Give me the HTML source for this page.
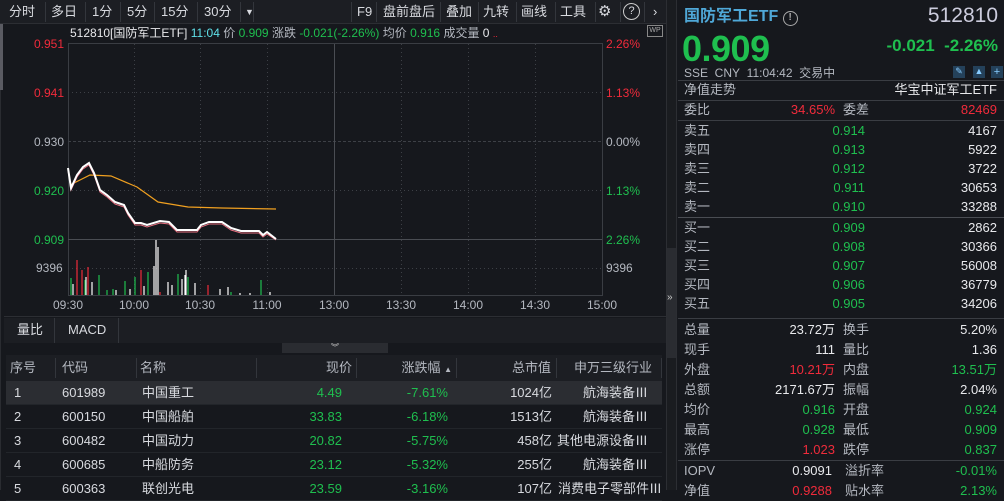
<!DOCTYPE html><html><head><meta charset="utf-8"><style>
*{margin:0;padding:0;box-sizing:border-box}
body{width:1004px;height:490px;background:#16181d;color:#d8dadf;font-family:"Liberation Sans","Noto Sans CJK SC",sans-serif;font-size:13px;position:relative;overflow:hidden}
.a{position:absolute;white-space:nowrap}
.g{color:#1fbf4f}.r{color:#f02b3b}.w{color:#e8e9ec}.l{color:#b4b8c0}
.tb{position:absolute;left:0;top:0;width:666px;height:24px;background:#1c1e23;border-bottom:1px solid #2c2e33}
.tb span{position:absolute;top:3px;font-size:13px;line-height:18px;height:18px;color:#d8dadf}
.sep{position:absolute;top:2px;width:1px;height:20px;background:#33363c}
.rp div.row{position:absolute;left:684px;width:313px;height:18px;font-size:13px;line-height:18px}
.rp div.row span{line-height:18px;height:18px;top:0}
.rp .k{position:absolute;left:0}
.rp .v{position:absolute;right:162px}
.rp .k2{position:absolute;left:159px}
.rp .v2{position:absolute;right:0}
.hl{position:absolute;height:1px;background:#3a3d43}
.tr{position:absolute;left:6px;width:656px;height:24px;font-size:13px;border-bottom:1px solid #22252a}
.tr span{position:absolute;top:3px;line-height:18px;height:18px}
.th span{line-height:18px;height:18px}
</style></head><body>
<div class="tb">
<span style="left:9px">分时</span><div class="sep" style="left:45px"></div>
<span style="left:51px">多日</span><div class="sep" style="left:85px"></div>
<span style="left:92px">1分</span><div class="sep" style="left:120px"></div>
<span style="left:127px">5分</span><div class="sep" style="left:154px"></div>
<span style="left:161px">15分</span><div class="sep" style="left:197px"></div>
<span style="left:204px">30分</span><div class="sep" style="left:240px"></div>
<span style="left:245px;font-size:9px">▼</span><div class="sep" style="left:253px"></div>
<div class="sep" style="left:351px"></div><span style="left:357px">F9</span><div class="sep" style="left:376px"></div>
<span style="left:383px">盘前盘后</span><div class="sep" style="left:440px"></div>
<span style="left:446px">叠加</span><div class="sep" style="left:478px"></div>
<span style="left:483px">九转</span><div class="sep" style="left:516px"></div>
<span style="left:521px">画线</span><div class="sep" style="left:555px"></div>
<span style="left:560px">工具</span><div class="sep" style="left:595px"></div>
<span style="left:598px;font-size:15px">⚙</span><div class="sep" style="left:620px"></div>
<span style="left:623px;top:3px;width:17px;height:17px;border:1.5px solid #ccc;border-radius:50%;font-size:11px;text-align:center;line-height:14px">?</span><div class="sep" style="left:644px"></div>
<span style="left:653px">›</span>
</div>
<div class="a" style="left:0;top:24px;width:3px;height:66px;background:#5a5b62"></div>
<div class="a" style="left:0;top:90px;width:1px;height:400px;background:#2a2c31"></div>
<div class="a" style="left:70px;top:25px;font-size:12px;line-height:16px"><span class="w">512810[国防军工ETF]</span> <span style="color:#5fe0e8">11:04</span> <span class="l">价</span> <span class="g">0.909</span> <span class="l">涨跌</span> <span class="g">-0.021(-2.26%)</span> <span class="l">均价</span> <span class="g">0.916</span> <span class="l">成交量</span> <span class="w">0</span> <span class="r" style="font-size:9px">..</span></div>
<div class="a" style="left:647px;top:25px;width:16px;height:12px;border:1px solid #888;font-size:7px;color:#aaa;text-align:center;line-height:10px">WP</div>
<svg class="a" style="left:0;top:0" width="666" height="320">
<g font-family="Liberation Sans" font-size="12">
<text x="34" y="48" fill="#f02b3b">0.951</text><text x="34" y="97" fill="#f02b3b">0.941</text>
<text x="34" y="146" fill="#b4b8c0">0.930</text><text x="34" y="195" fill="#1fbf4f">0.920</text>
<text x="34" y="244" fill="#1fbf4f">0.909</text><text x="36" y="272" fill="#b4b8c0">9396</text>
<text x="606" y="48" fill="#f02b3b">2.26%</text><text x="606" y="97" fill="#f02b3b">1.13%</text>
<text x="606" y="146" fill="#b4b8c0">0.00%</text><text x="606" y="195" fill="#1fbf4f">1.13%</text>
<text x="606" y="244" fill="#1fbf4f">2.26%</text><text x="606" y="272" fill="#b4b8c0">9396</text>
<g fill="#b4b8c0" text-anchor="middle"><text x="68" y="309">09:30</text><text x="134" y="309">10:00</text><text x="200" y="309">10:30</text><text x="267" y="309">11:00</text><text x="334" y="309">13:00</text><text x="401" y="309">13:30</text><text x="468" y="309">14:00</text><text x="535" y="309">14:30</text><text x="602" y="309">15:00</text></g>
</g>
<rect x="68.5" y="43.5" width="534" height="252" fill="none" stroke="#3a3d43"/>
<g stroke="#3d4046" stroke-dasharray="1,3">
<line x1="68" y1="92.5" x2="602" y2="92.5"/><line x1="68" y1="190.5" x2="602" y2="190.5"/><line x1="68" y1="268.5" x2="602" y2="268.5"/>
<line x1="134.5" y1="44" x2="134.5" y2="295"/><line x1="200.5" y1="44" x2="200.5" y2="295"/><line x1="267.5" y1="44" x2="267.5" y2="295"/><line x1="401.5" y1="44" x2="401.5" y2="295"/><line x1="468.5" y1="44" x2="468.5" y2="295"/><line x1="535.5" y1="44" x2="535.5" y2="295"/>
</g>
<line x1="68" y1="141.5" x2="602" y2="141.5" stroke="#3d4046" stroke-dasharray="3,2"/>
<line x1="68" y1="239.5" x2="602" y2="239.5" stroke="#4a4d53"/>
<line x1="334.5" y1="44" x2="334.5" y2="295" stroke="#4a4d53"/>
<polyline fill="none" stroke="#f0a020" stroke-width="1.2" points="70,185 90,175 111,176 137,187 158,202 188,207 222,208 276,209"/>
<polyline fill="none" stroke="#e87080" stroke-width="1" points="68,170 71,190 77,177 83,169 89,165 94,175 100,192 107,197 115,204 124,207 128,215 135,225 141,225 147,227 160,223 169,224 177,232 197,232 201,227 209,224 222,224 231,230 241,233 259,233 263,237 267,234 276,240"/>
<polyline fill="none" stroke="#fff" stroke-width="2" points="68,168 71,188 77,175 83,167 89,163 94,173 100,190 107,195 115,202 124,205 128,213 135,223 141,223 147,225 160,221 169,222 177,230 197,230 201,225 209,222 222,222 231,228 241,231 259,231 263,235 267,232 276,239"/>
<g stroke-width="1.2">
<g stroke="#1fbf4f"><line x1="71" y1="295" x2="71" y2="278"/><line x1="85" y1="295" x2="85" y2="280"/><line x1="99" y1="295" x2="99" y2="275"/><line x1="113" y1="295" x2="113" y2="289"/><line x1="125" y1="295" x2="125" y2="281"/><line x1="135" y1="295" x2="135" y2="277"/><line x1="148" y1="295" x2="148" y2="272"/><line x1="178" y1="295" x2="178" y2="274"/><line x1="188" y1="295" x2="188" y2="277"/><line x1="107" y1="295" x2="107" y2="290"/><line x1="261" y1="295" x2="261" y2="280"/><line x1="231" y1="295" x2="231" y2="292"/></g>
<g stroke="#f02b3b"><line x1="77" y1="295" x2="77" y2="260"/><line x1="82" y1="295" x2="82" y2="270"/><line x1="88" y1="295" x2="88" y2="267"/><line x1="141" y1="295" x2="141" y2="270"/><line x1="208" y1="295" x2="208" y2="285"/><line x1="160" y1="295" x2="160" y2="292"/></g>
<g stroke="#fff"><line x1="73" y1="295" x2="73" y2="284"/><line x1="86" y1="295" x2="86" y2="277"/><line x1="92" y1="295" x2="92" y2="282"/><line x1="116" y1="295" x2="116" y2="290"/><line x1="130" y1="295" x2="130" y2="289"/><line x1="144" y1="295" x2="144" y2="286"/><line x1="154" y1="295" x2="154" y2="266"/><line x1="156" y1="295" x2="156" y2="240"/><line x1="158" y1="295" x2="158" y2="247"/><line x1="168" y1="295" x2="168" y2="282"/><line x1="172" y1="295" x2="172" y2="285"/><line x1="182" y1="295" x2="182" y2="279"/><line x1="185" y1="295" x2="185" y2="275"/><line x1="186" y1="295" x2="186" y2="270"/><line x1="195" y1="295" x2="195" y2="283"/><line x1="220" y1="295" x2="220" y2="289"/><line x1="228" y1="295" x2="228" y2="287"/><line x1="240" y1="295" x2="240" y2="293"/><line x1="250" y1="295" x2="250" y2="293"/><line x1="270" y1="295" x2="270" y2="292"/></g>
</g>
</svg>
<div class="hl" style="left:4px;top:316px;width:662px;background:#2c2e33"></div>
<div class="a" style="left:4px;top:318px;width:662px;height:25px;background:#1c1e23"></div>
<div class="a" style="left:4px;top:318px;width:51px;height:25px;border-right:1px solid #33363c;padding-left:13px;line-height:24px">量比</div>
<div class="a" style="left:56px;top:318px;width:63px;height:25px;border-right:1px solid #33363c;padding-left:12px;line-height:24px">MACD</div>
<div class="a" style="left:282px;top:343px;width:106px;height:10px;background:#2a2c31;font-size:8px;text-align:center;line-height:9px;color:#ccc">︾</div>
<div class="a th" style="left:6px;top:355px;width:656px;height:26px;background:#1c1e23;font-size:13px;color:#b4b8c0">
<span class="a" style="left:4px;top:4px">序号</span><span class="a" style="left:56px;top:4px">代码</span><span class="a" style="left:134px;top:4px">名称</span>
<span class="a" style="right:310px;top:4px">现价</span><span class="a" style="right:210px;top:4px">涨跌幅 <span style="font-size:8px">▲</span></span><span class="a" style="right:111px;top:4px">总市值</span><span class="a" style="right:10px;top:4px">申万三级行业</span>
<div class="sep" style="left:49px;top:3px"></div><div class="sep" style="left:130px;top:3px"></div><div class="sep" style="left:250px;top:3px"></div><div class="sep" style="left:350px;top:3px"></div><div class="sep" style="left:450px;top:3px"></div><div class="sep" style="left:550px;top:3px"></div><div class="sep" style="left:655px;top:3px"></div>
</div>
<div class="tr" style="top:381px;background:#2b2d32"><span style="left:8px">1</span><span style="left:56px">601989</span><span style="left:136px">中国重工</span><span class="g" style="right:320px">4.49</span><span class="g" style="right:214px">-7.61%</span><span style="right:110px">1024亿</span><span style="right:14px">航海装备Ⅲ</span></div>
<div class="tr" style="top:405px"><span style="left:8px">2</span><span style="left:56px">600150</span><span style="left:136px">中国船舶</span><span class="g" style="right:320px">33.83</span><span class="g" style="right:214px">-6.18%</span><span style="right:110px">1513亿</span><span style="right:14px">航海装备Ⅲ</span></div>
<div class="tr" style="top:429px"><span style="left:8px">3</span><span style="left:56px">600482</span><span style="left:136px">中国动力</span><span class="g" style="right:320px">20.82</span><span class="g" style="right:214px">-5.75%</span><span style="right:110px">458亿</span><span style="right:14px">其他电源设备Ⅲ</span></div>
<div class="tr" style="top:453px"><span style="left:8px">4</span><span style="left:56px">600685</span><span style="left:136px">中船防务</span><span class="g" style="right:320px">23.12</span><span class="g" style="right:214px">-5.32%</span><span style="right:110px">255亿</span><span style="right:14px">航海装备Ⅲ</span></div>
<div class="tr" style="top:477px"><span style="left:8px">5</span><span style="left:56px">600363</span><span style="left:136px">联创光电</span><span class="g" style="right:320px">23.59</span><span class="g" style="right:214px">-3.16%</span><span style="right:110px">107亿</span><span style="right:0">消费电子零部件Ⅲ</span></div>
<div class="a" style="left:666px;top:0;width:11px;height:490px;background:#1a1c20;border-left:1px solid #2c2e33;border-right:1px solid #2c2e33"></div>
<div class="a" style="left:667px;top:248px;width:9px;height:110px;background:#2a2c31;color:#ccc;font-size:10px;padding-top:44px">»</div>
<div class="rp">
<div class="a" style="left:684px;top:6px;font-size:16px;line-height:22px;font-weight:bold;color:#4fa8d8">国防军工ETF <span style="display:inline-block;width:15px;height:15px;border:1.5px solid #aaa;border-radius:50%;font-size:10px;color:#aaa;text-align:center;line-height:12px;vertical-align:1px">!</span></div>
<div class="a w" style="right:6px;top:4px;font-size:21px;color:#ccd">512810</div>
<div class="a g" style="left:682px;top:28px;font-size:36px;font-weight:bold;letter-spacing:-0.5px">0.909</div>
<div class="a g" style="right:6px;top:36px;font-size:17px;font-weight:bold">-0.021&nbsp;&nbsp;-2.26%</div>
<div class="a l" style="left:684px;top:65px;font-size:12px;line-height:16px">SSE&nbsp; CNY&nbsp; 11:04:42&nbsp; 交易中</div>
<div class="a" style="left:953px;top:66px;width:12px;height:12px;background:#24415a;color:#8cf;font-size:9px;text-align:center">✎</div>
<div class="a" style="left:973px;top:66px;width:12px;height:12px;background:#24415a;color:#8cf;font-size:9px;text-align:center">▲</div>
<div class="a" style="left:991px;top:66px;width:12px;height:12px;background:#24415a;color:#8cf;font-size:11px;line-height:12px;text-align:center">+</div>
<div class="hl" style="left:678px;top:80px;width:326px"></div>
<div class="row" style="top:81px"><span class="k l">净值走势</span><span class="v2 w">华宝中证军工ETF</span></div>
<div class="hl" style="left:678px;top:100px;width:326px"></div>
<div class="row" style="top:101px"><span class="k l">委比</span><span class="v r">34.65%</span><span class="k2 l">委差</span><span class="v2 r">82469</span></div>
<div class="hl" style="left:678px;top:120px;width:326px"></div>
<div class="row" style="top:122px"><span class="k l">卖五</span><span class="v g" style="right:132px">0.914</span><span class="v2 w">4167</span></div>
<div class="row" style="top:141px"><span class="k l">卖四</span><span class="v g" style="right:132px">0.913</span><span class="v2 w">5922</span></div>
<div class="row" style="top:160px"><span class="k l">卖三</span><span class="v g" style="right:132px">0.912</span><span class="v2 w">3722</span></div>
<div class="row" style="top:179px"><span class="k l">卖二</span><span class="v g" style="right:132px">0.911</span><span class="v2 w">30653</span></div>
<div class="row" style="top:198px"><span class="k l">卖一</span><span class="v g" style="right:132px">0.910</span><span class="v2 w">33288</span></div>
<div class="hl" style="left:678px;top:217px;width:326px;background:#4a4d53"></div>
<div class="row" style="top:219px"><span class="k l">买一</span><span class="v g" style="right:132px">0.909</span><span class="v2 w">2862</span></div>
<div class="row" style="top:238px"><span class="k l">买二</span><span class="v g" style="right:132px">0.908</span><span class="v2 w">30366</span></div>
<div class="row" style="top:257px"><span class="k l">买三</span><span class="v g" style="right:132px">0.907</span><span class="v2 w">56008</span></div>
<div class="row" style="top:276px"><span class="k l">买四</span><span class="v g" style="right:132px">0.906</span><span class="v2 w">36779</span></div>
<div class="row" style="top:295px"><span class="k l">买五</span><span class="v g" style="right:132px">0.905</span><span class="v2 w">34206</span></div>
<div class="hl" style="left:678px;top:318px;width:326px"></div>
<div class="row" style="top:321px"><span class="k l">总量</span><span class="v w">23.72万</span><span class="k2 l">换手</span><span class="v2 w">5.20%</span></div>
<div class="row" style="top:341px"><span class="k l">现手</span><span class="v w">111</span><span class="k2 l">量比</span><span class="v2 w">1.36</span></div>
<div class="row" style="top:361px"><span class="k l">外盘</span><span class="v r">10.21万</span><span class="k2 l">内盘</span><span class="v2 g">13.51万</span></div>
<div class="row" style="top:381px"><span class="k l">总额</span><span class="v w">2171.67万</span><span class="k2 l">振幅</span><span class="v2 w">2.04%</span></div>
<div class="row" style="top:401px"><span class="k l">均价</span><span class="v g">0.916</span><span class="k2 l">开盘</span><span class="v2 g">0.924</span></div>
<div class="row" style="top:421px"><span class="k l">最高</span><span class="v g">0.928</span><span class="k2 l">最低</span><span class="v2 g">0.909</span></div>
<div class="row" style="top:441px"><span class="k l">涨停</span><span class="v r">1.023</span><span class="k2 l">跌停</span><span class="v2 g">0.837</span></div>
<div class="hl" style="left:678px;top:460px;width:326px"></div>
<div class="row" style="top:462px"><span class="k l">IOPV</span><span class="v w" style="right:165px">0.9091</span><span class="k2 l" style="left:161px">溢折率</span><span class="v2 g">-0.01%</span></div>
<div class="row" style="top:482px"><span class="k l">净值</span><span class="v r" style="right:165px">0.9288</span><span class="k2 l" style="left:161px">贴水率</span><span class="v2 g">2.13%</span></div>
</div>
</body></html>
